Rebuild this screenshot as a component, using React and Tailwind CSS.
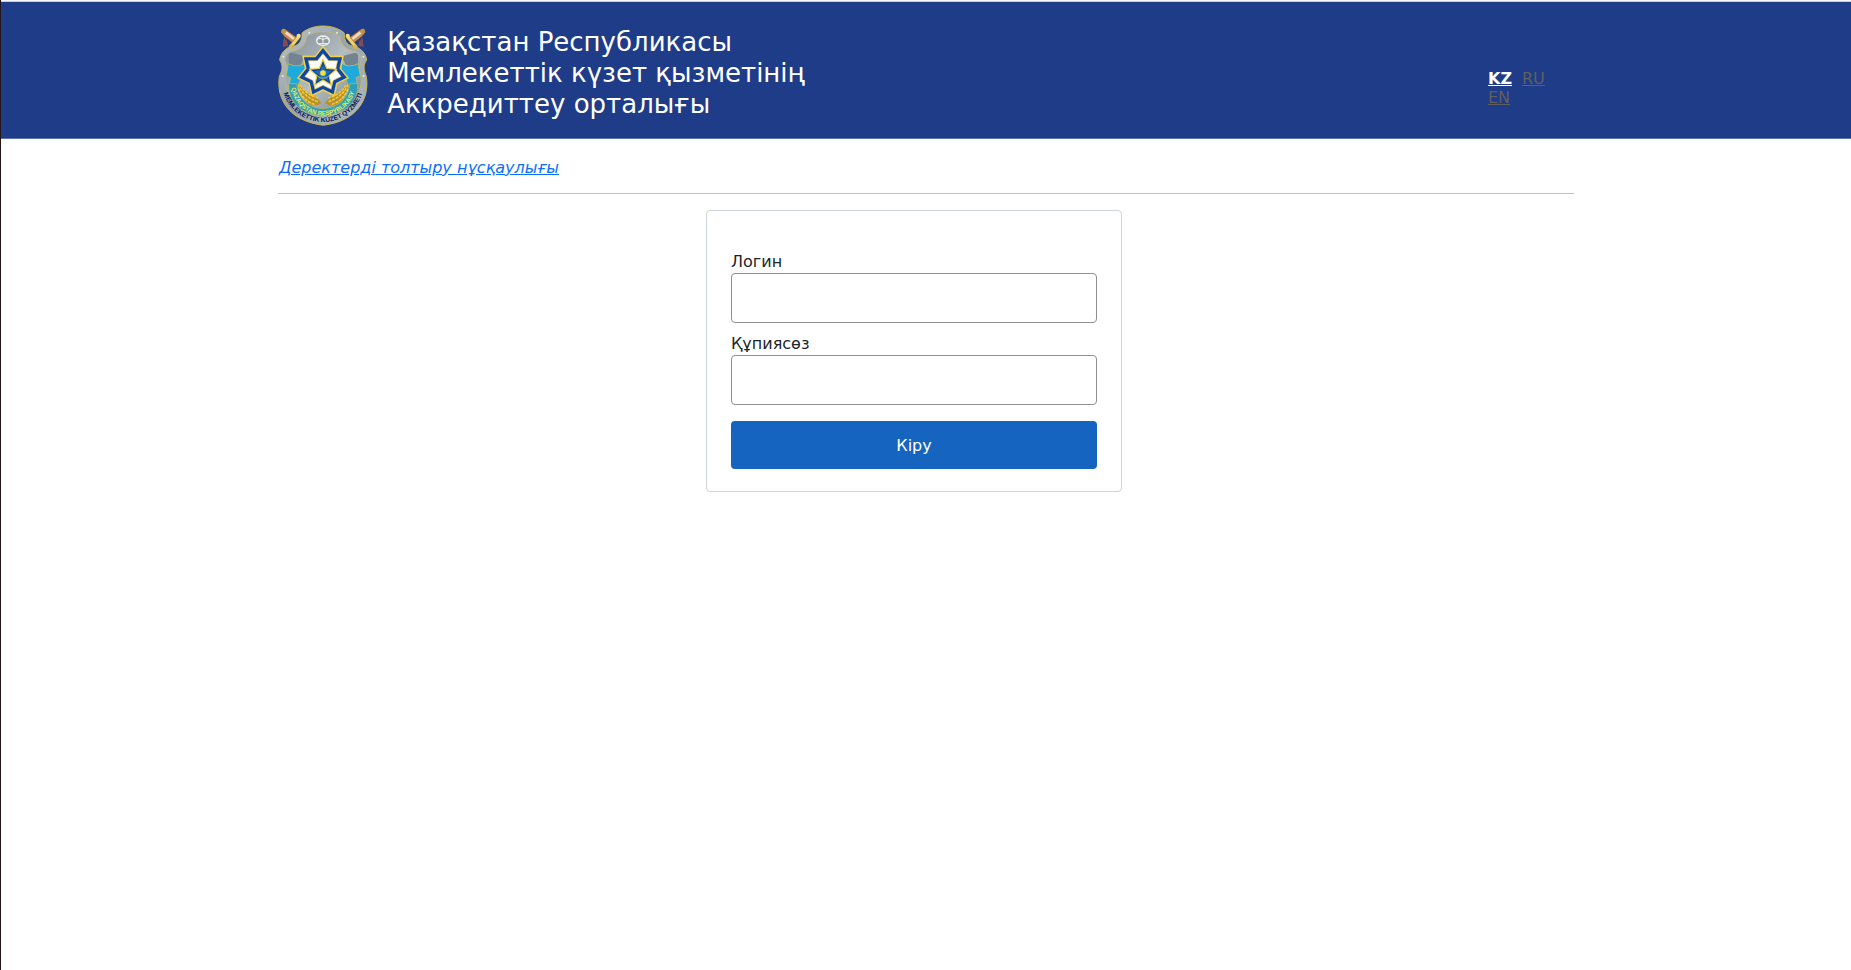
const ringStar = (n, cx, cy, outer, inner, rot = -90) =>
  Array.from({ length: n * 2 }, (_, i) => {
    const r = i % 2 ? inner : outer;
    const a = ((rot + (i * 180) / n) * Math.PI) / 180;
    return `${(cx + r * Math.cos(a)).toFixed(1)},${(cy + r * Math.sin(a)).toFixed(1)}`;
  }).join(" ");

function Sword() {
  return (
    <g>
      <path d="M42 56 Q38 62 42 70" fill="none" stroke="#c9a03c" strokeWidth="2" />
      <path d="M39 62 L49 62 L52 79 L36 81 Z" fill="#8a4a50" />
      <path d="M33 34 Q35 24 47 31 L80 54 L66 70 L40 50 Z" fill="#c98a58" stroke="#6b4638" strokeWidth="2" />
      <path d="M45 38 L70 58" stroke="#f3dcc0" strokeWidth="8" />
      <path d="M31 38 Q32 25 42 28 L48 34 L39 47 Z" fill="#b9964a" />
      <path d="M57 77 L80 48 L88 55 L66 83 Z" fill="#ecd36b" stroke="#876a24" strokeWidth="1.5" />
      <circle cx="84" cy="49" r="6.5" fill="#f3df85" />
      <circle cx="61" cy="81" r="6.5" fill="#d8b846" />
    </g>
  );
}

function Wreath() {
  return (
    <g>
      <path d="M80 190 Q92 196 101 210 Q112 222 126 224 Q138 232 152 250 Q138 262 118 255 Q92 240 80 190 Z" fill="#b98f2b" />
      <g fill="none" stroke="#f0cb38" strokeWidth="5" strokeLinecap="round" strokeDasharray="5 7">
        <path d="M84 196 Q98 232 146 248" />
        <path d="M90 198 Q108 226 140 234" />
        <path d="M84 210 Q98 244 136 256" />
      </g>
    </g>
  );
}

function Emblem({ className }) {
  return (
    <svg viewBox="22 16 272 306" className={className} aria-label="Эмблема">
      <defs>
        <linearGradient id="steel" x1="0" y1="0" x2="1" y2="1">
          <stop offset="0" stopColor="#b9c3c9" />
          <stop offset=".45" stopColor="#98a4ac" />
          <stop offset="1" stopColor="#b0babf" />
        </linearGradient>
        <linearGradient id="inner" x1="0" y1="0" x2="1" y2="1">
          <stop offset="0" stopColor="#7f8c96" />
          <stop offset=".5" stopColor="#b4bdc1" />
          <stop offset="1" stopColor="#788791" />
        </linearGradient>
        <path id="motto" d="M39 221 A124 124 0 0 0 276 218" />
        <path id="country" d="M62 205 A97 97 0 0 0 254 203" />
      </defs>
      <path d="M157 19 C181 19 205 26 221 40 C219 65 233 81 254 80 C271 87 287 103 288 121 C278 135 278 149 287 170 C298 238 259 304 158 317 C55 304 16 238 26 170 C37 149 36 135 27 121 C29 103 43 87 60 80 C82 81 96 65 94 40 C110 26 134 19 157 19 Z" fill="url(#steel)" stroke="#c9b34d" strokeWidth="3" />
      <path d="M157 36 C177 36 194 41 207 50 C209 77 229 94 254 95 C265 101 273 110 273 121 C263 140 266 158 272 174 C273 222 244 270 158 289 C72 270 42 222 43 174 C50 158 52 140 42 121 C43 110 50 101 61 95 C86 94 106 77 108 50 C120 41 137 36 157 36 Z" fill="url(#inner)" stroke="#d0bd62" strokeWidth="2" />
      <path d="M54 107 Q54 98 65 100 L102 110 L87 142 L54 133 Z" fill="#738490" />
      <path d="M262 107 Q261 98 250 100 L213 110 L228 142 L262 133 Z" fill="#738490" />
      <Sword />
      <g transform="translate(315 0) scale(-1 1)">
        <Sword />
      </g>
      <g fill="none" stroke="#f1f3f2" strokeWidth="4">
        <ellipse cx="157" cy="63" rx="19" ry="14" fill="#8f9a9d" />
        <path d="M138 62 Q148 51 157 61 Q166 51 176 62 M144 72 L170 72 M157 49 L157 72" strokeWidth="3" />
      </g>
      <g fill="#20a9dc" stroke="#d9bc3d" strokeWidth="2">
        <path d="M53 132 Q80 146 103 131 L103 169 Q86 176 82 202 L54 202 L60 174 L47 169 Z" />
        <path d="M262 132 Q235 146 212 131 L212 169 Q229 176 234 202 L262 202 L256 174 L269 169 Z" />
      </g>
      <path d="M54 192 L78 192 Q88 262 157 267 Q228 262 238 192 L262 192 Q262 280 157 288 Q54 280 54 192 Z" fill="#2f9fbe" stroke="#cbb844" strokeWidth="2" />
      <Wreath />
      <g transform="translate(315 0) scale(-1 1)">
        <Wreath />
      </g>
      <polygon points={ringStar(7, 157, 158, 77, 53)} fill="#0e46a8" stroke="#efd04a" strokeWidth="4.5" strokeLinejoin="round" />
      <polygon points={ringStar(7, 157, 158, 56, 39)} fill="#fffef6" stroke="#d4ba45" strokeWidth="2" strokeLinejoin="round" />
      <polygon points={ringStar(5, 157, 162, 43, 19)} fill="#0d4aa6" stroke="#f2cf3c" strokeWidth="3.5" strokeLinejoin="round" />
      <polygon points={ringStar(5, 157, 162, 27, 12)} fill="#1c6fbd" />
      <circle cx="157" cy="160" r="8.5" fill="#f1e33c" />
      <path d="M141 170 Q157 182 173 170" fill="none" stroke="#a9b85c" strokeWidth="3" />
      <text fill="#e6ee52" fontSize="19" fontWeight="700" fontFamily="Liberation Sans, sans-serif">
        <textPath href="#country" textLength="262" lengthAdjust="spacingAndGlyphs">QAZAQSTAN RESPÝBLIKASY</textPath>
      </text>
      <text fill="#07195c" fontSize="20" fontWeight="700" fontFamily="Liberation Sans, sans-serif">
        <textPath href="#motto" textLength="310" lengthAdjust="spacingAndGlyphs">MEMLEKETTIK KÚZET QYZMETI</textPath>
      </text>
      <g fill="#e8ecee">
        <circle cx="116" cy="39" r="3" />
        <circle cx="199" cy="39" r="3" />
        <circle cx="38" cy="111" r="3" />
        <circle cx="278" cy="111" r="3" />
        <circle cx="36" cy="169" r="3" />
        <circle cx="279" cy="169" r="3" />
      </g>
    </svg>
  );
}

function Field({ label, type, id }) {
  return (
    <div className="flex flex-col">
      <label htmlFor={id} className="h-6 pt-px leading-6">{label}</label>
      <input id={id} type={type} className="h-[50px] w-full rounded border border-[#8f8f8f] bg-white px-3 outline-none" />
    </div>
  );
}

export default function App() {
  return (
    <div className="min-h-screen border-l border-[#24161b] bg-white text-base text-[#212529]" style={{ fontFamily: '"DejaVu Sans", sans-serif' }}>
      <div className="h-0.5 border-b border-[#c9d3d3] bg-[#f6f8f7]" />
      <header className="h-[137px] border-b border-[#5873ae] bg-[#1f3c88]">
        <div className="ml-[277px] flex w-[1296px] items-start">
          <Emblem className="mt-[23px] block h-[102px] w-[90.67px]" />
          <h1 className="ml-[18.5px] pt-[25px] text-[26px] leading-[31.2px] text-white">
            Қазақстан Республикасы
            <br />
            Мемлекеттік күзет қызметінің
            <br />
            Аккредиттеу орталығы
          </h1>
          <nav className="mr-[15px] ml-auto flex w-[71px] flex-wrap gap-x-[10px] pt-[67px] leading-[19px] text-[#5f5f5f] underline">
            <a href="#kz" className="font-bold text-white">KZ</a>
            <a href="#ru">RU</a>
            <a href="#en">EN</a>
          </nav>
        </div>
      </header>
      <main className="ml-[277px] w-[1296px]">
        <div className="h-[55px] border-b border-[#bfc0c1] pt-[17px] pl-px leading-6">
          <a href="#guide" className="text-[#0d6efd] italic underline">Деректерді толтыру нұсқаулығы</a>
        </div>
        <form className="mt-4 ml-[428px] flex h-[282px] w-[416px] flex-col rounded border border-[#ced4da] px-6 pt-[38px]">
          <Field label="Логин" type="text" id="login" />
          <div className="mt-2">
            <Field label="Құпиясөз" type="password" id="password" />
          </div>
          <button type="button" className="mt-4 h-12 shrink-0 rounded bg-[#1565c0] pt-0.5 text-white">Кіру</button>
        </form>
      </main>
    </div>
  );
}
